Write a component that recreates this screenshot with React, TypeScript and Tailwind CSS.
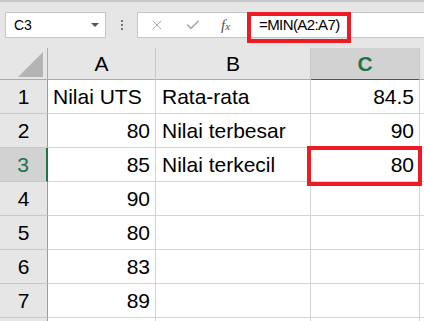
import { X, Check } from "lucide-react";

const rows = [
  { n: "1", a: "Nilai UTS", aLeft: true, b: "Rata-rata", c: "84.5" },
  { n: "2", a: "80", b: "Nilai terbesar", c: "90" },
  { n: "3", a: "85", b: "Nilai terkecil", c: "80" },
  { n: "4", a: "90", b: "", c: "" },
  { n: "5", a: "80", b: "", c: "" },
  { n: "6", a: "83", b: "", c: "" },
  { n: "7", a: "89", b: "", c: "" },
  { n: "", a: "", b: "", c: "" },
];

export default function App() {
  return (
    <div className="relative h-[321px] w-[424px] overflow-hidden bg-[#e6e6e6] font-['Liberation_Sans',Arial,sans-serif] text-black">
      {/* Formula bar */}
      <div className="h-[48px] border-t-2 border-[#c8c8c8] pt-[10px]">
        <div className="flex items-start">
          <div className="ml-[5px] flex h-[26px] w-[101px] items-center justify-between border border-[#c6c6c6] bg-white pl-[8px] pr-[6px] text-[14px]">
            <span>C3</span>
            <svg width="8" height="5" viewBox="0 0 8 5">
              <path d="M0 0h8L4 4z" fill="#555" />
            </svg>
          </div>
          <div className="flex w-[31px] flex-col items-center gap-[2px] pt-[8px]">
            <span className="h-[2px] w-[2px] bg-[#777]" />
            <span className="h-[2px] w-[2px] bg-[#777]" />
            <span className="h-[2px] w-[2px] bg-[#777]" />
          </div>
          <div className="flex h-[26px] flex-1 items-center border border-r-0 border-[#c6c6c6] bg-white">
            <X size={16} strokeWidth={1.5} className="ml-[11px] text-[#ababab]" />
            <Check size={16} strokeWidth={2.4} className="ml-[20px] text-[#ababab]" />
            <span className="ml-[20px] font-['Liberation_Serif',serif] text-[15px] italic text-[#555]">
              f<span className="text-[11px]">x</span>
            </span>
            <span className="ml-[29px] text-[15px] tracking-[-0.6px]">=MIN(A2:A7)</span>
          </div>
        </div>
      </div>

      {/* Column headers */}
      <div className="grid h-[32px] grid-cols-[48px_108px_155px_109px_1fr] border-b border-[#ababab] text-[21px] leading-[31px]">
        <div className="flex items-end justify-end border-r border-[#ababab] pb-[3px] pr-[3px]">
          <svg width="26" height="26" viewBox="0 0 26 26">
            <path d="M25 0V25H0z" fill="#b4b4b4" />
          </svg>
        </div>
        <div className="border-r border-[#c8c8c8] text-center">A</div>
        <div className="border-r border-[#c8c8c8] text-center">B</div>
        <div className="border-b-2 border-r border-[#217346] border-r-[#c8c8c8] bg-[#d2d2d2] text-center font-bold text-[#217346]">
          C
        </div>
        <div />
      </div>

      {/* Rows */}
      {rows.map((r, i) => {
        const sel = r.n === "3";
        return (
          <div
            key={i}
            className="grid h-[34px] grid-cols-[48px_108px_155px_109px_1fr] text-[21px] leading-[33px]"
          >
            <div
              className={
                sel
                  ? "border-b border-r-2 border-b-[#c8c8c8] border-r-[#217346] bg-[#d2d2d2] text-center text-[#217346]"
                  : "border-b border-r border-b-[#c8c8c8] border-r-[#9b9b9b] text-center"
              }
            >
              {r.n}
            </div>
            <div
              className={`whitespace-nowrap border-b border-r border-[#d4d4d4] bg-white ${
                r.aLeft ? "pl-[5px] text-left" : "pr-[5px] text-right"
              }`}
            >
              {r.a}
            </div>
            <div className="whitespace-nowrap border-b border-r border-[#d4d4d4] bg-white pl-[6px]">
              {r.b}
            </div>
            <div className="border-b border-r border-[#d4d4d4] bg-white pr-[5px] text-right">
              {r.c}
            </div>
            <div className="border-b border-[#d4d4d4] bg-white" />
          </div>
        );
      })}

      {/* Annotations */}
      <div className="absolute left-[247px] top-[12px] h-[31px] w-[104px] border-4 border-[#ed1c24]" />
      <div className="absolute left-[307px] top-[146px] h-[40px] w-[115px] border-4 border-[#ed1c24]" />
    </div>
  );
}
